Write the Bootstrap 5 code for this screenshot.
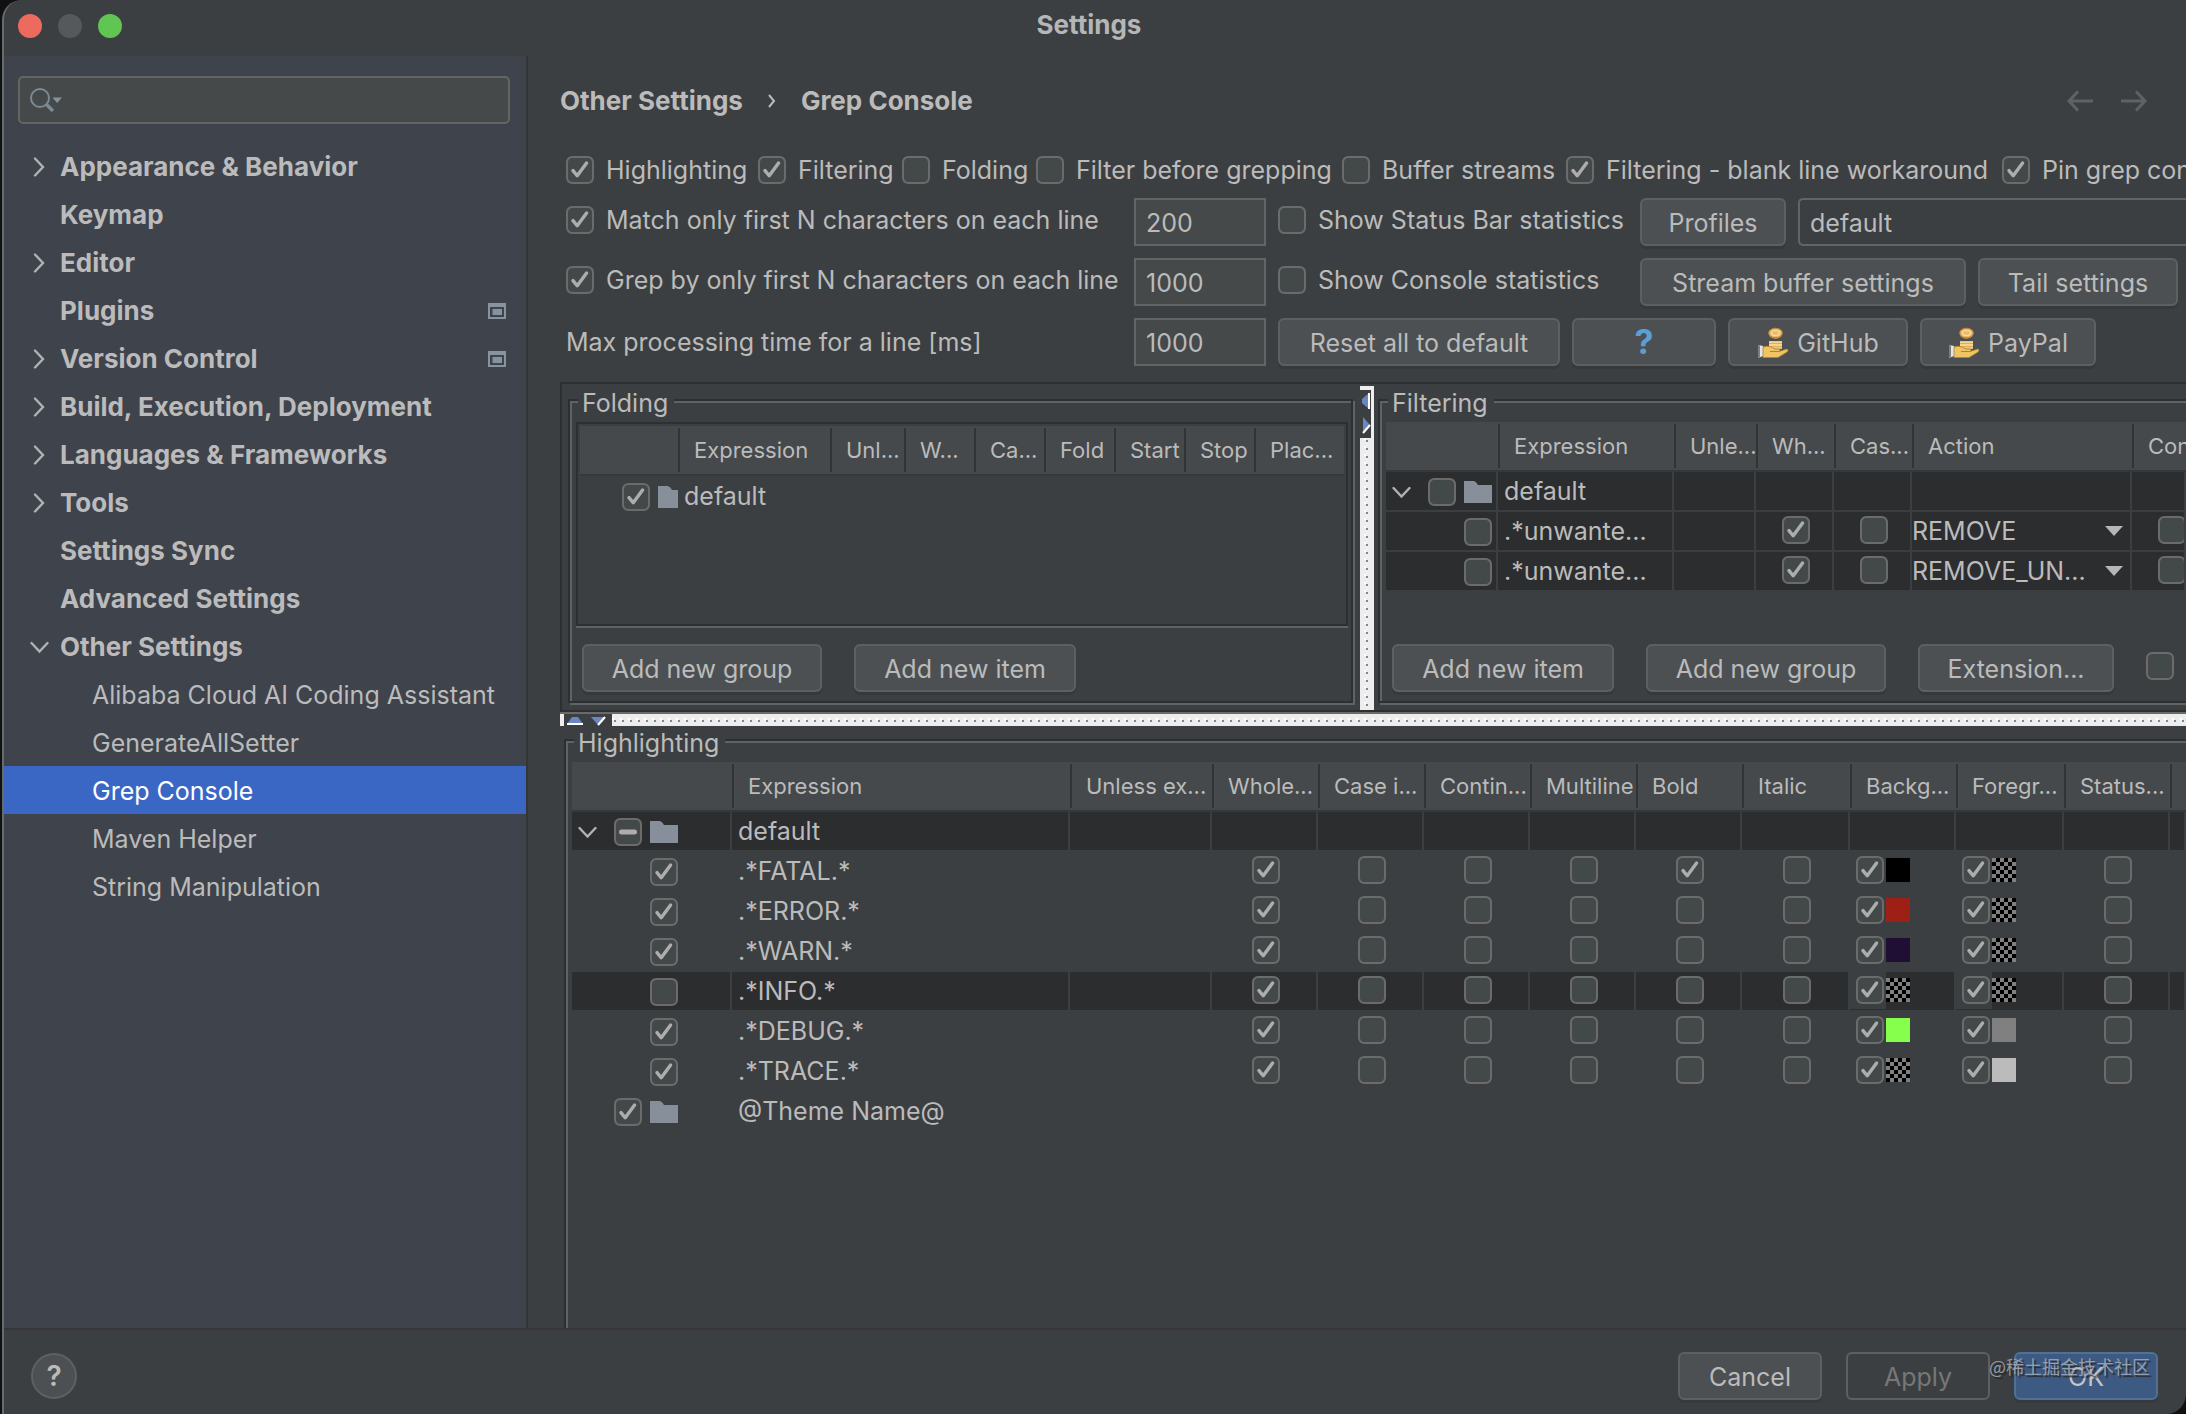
<!DOCTYPE html>
<html lang="en" data-bs-theme="dark">
<head>
<meta charset="utf-8">
<meta name="viewport" content="width=device-width, initial-scale=1">
<title>Settings</title>
<link href="https://cdn.jsdelivr.net/npm/bootstrap@5.3.0/dist/css/bootstrap.min.css" rel="stylesheet">
<style>
:root{--panel:#3c3f41;--side:#3f434c;--ink:#bbbbbb;--dark:#2d2f30;--lite:#606364;--sel:#2c2d2f;--head:#45494b;--field:#45494a;--edge:#646464}
body{background:#101112;color:var(--ink);font-family:Inter,"Noto Sans CJK SC",sans-serif;font-size:25px;line-height:28px;overflow:hidden}
.app-window{margin-left:2px;border-left:2px solid #686b6d;border-radius:20px 0 20px 0;background:var(--panel);overflow:hidden;position:relative}
.titlebar{height:56px;padding:0 26px 4px 14px}
.light{width:24px;height:24px;border-radius:50%}
.title-text{font-weight:700;font-size:26px;color:#b4b6b7;padding-bottom:2px}
.sidebar{width:524px;background:var(--side);border-right:2px solid #333537;padding-top:20px}
.search-wrap{margin:0 16px 18px 14px;height:48px;background:var(--field);border:2px solid var(--edge);border-radius:5px;padding-left:10px}
.search-wrap input{background:transparent;border:0;outline:0;color:var(--ink);min-width:0}
.side-link{height:48px;padding:2px 20px 0 26px;color:var(--ink);text-decoration:none;font-weight:700;font-size:26px}
.side-link .twist{width:20px;margin-right:10px}
.side-link.child{font-weight:400;font-size:25px;padding-left:88px}
.side-link.active{background:#3a66c4;color:#fff;margin-left:-2px;padding-left:90px!important}
.main-pane{padding-left:32px;min-width:0;overflow:hidden}
.crumbs{height:90px;margin-bottom:10px;font-weight:700;font-size:26px;padding-right:38px}
.opt-row{padding-left:6px;margin-bottom:12px;height:48px;white-space:nowrap}
.opt-row.first{display:grid;grid-template-columns:192px 144px 134px 306px 224px 436px auto;height:28px;margin-bottom:14px}
.opt-row.last{margin-bottom:16px}
.tick{gap:12px;flex:none}
.tall-tick{padding-bottom:4px}
.form-check-input{width:28px;height:28px;margin:0;flex:none;background-color:#434949;border:2px solid #6b6b6b;border-radius:5px;background-size:28px 28px;background-position:-2px -2px;--bs-form-check-bg:#434949}
.form-check-input:checked{background-color:#434949;border-color:#6b6b6b;background-image:url("data:image/svg+xml,%3Csvg xmlns='http://www.w3.org/2000/svg' viewBox='0 0 28 28'%3E%3Cpath d='M7 14.6 11.2 19.8 20.6 7' fill='none' stroke='%23adadad' stroke-width='3.4' stroke-linecap='round' stroke-linejoin='round'/%3E%3C/svg%3E")!important}
.form-check-input[type=checkbox]:indeterminate{background-color:#434949;border-color:#6b6b6b;background-image:url("data:image/svg+xml,%3Csvg xmlns='http://www.w3.org/2000/svg' viewBox='0 0 28 28'%3E%3Cpath d='M7.500 14H20.500' fill='none' stroke='%23adadad' stroke-width='5' stroke-linecap='round'/%3E%3C/svg%3E")}
.col-a{width:568px}.col-b{width:362px}
.num-box{width:132px;height:48px;background:var(--field);border:2px solid var(--edge);border-radius:0;color:var(--ink);font-size:25px;padding:2px 10px 0;margin-right:12px;flex:none}
.combo{height:48px;background:var(--panel);border:2px solid var(--edge);border-right:0;border-radius:5px 0 0 5px;color:var(--ink);font-size:25px;padding:2px 10px 0}
.btn-ide{--bs-btn-color:var(--ink);--bs-btn-bg:#4c5052;--bs-btn-border-color:#5e6060;--bs-btn-hover-bg:#55595b;--bs-btn-hover-color:#ddd;--bs-btn-disabled-bg:transparent;--bs-btn-disabled-color:#777;--bs-btn-disabled-border-color:#5e6060;--bs-btn-disabled-opacity:1;--bs-btn-border-width:2px;--bs-btn-border-radius:6px;--bs-btn-font-size:25px;--bs-btn-line-height:28px;height:48px;padding:2px 24px 0;box-shadow:0 3px 0 #36393b;flex:none;white-space:nowrap}
.btn-ide:disabled{box-shadow:none}
.btn-ide.ok{--bs-btn-bg:#3d5a82;--bs-btn-border-color:#507098;--bs-btn-color:#c4c4c4}
.w-std{width:144px}.w-profile{width:146px}.w-stream{width:326px}.w-tail{width:200px}.w-reset{width:282px}.w-git{width:180px}.w-pay{width:176px}.w-group{width:240px}.w-item{width:222px}.w-ext{width:196px}
.qmark{color:#5b9fd0;font-weight:700;font-size:34px}
.split-box{border:solid var(--dark);border-width:2px 0 2px 2px;height:330px;overflow:hidden}
.split-edge{height:2px;background:#6a6a6a}
.pane{padding:15px 7px 7px 6px}
.pane-fold{width:798px}
.pane-filter{padding:15px 0 7px 4px;min-width:0}
.etched{border:2px solid var(--dark);box-shadow:2px 2px 0 var(--lite),inset 2px 2px 0 var(--lite);padding:0 3px 9px 6px;min-width:0}
.etched.open-right{border-right:0;padding-right:0}
.etched.open-end{border-bottom:0;margin:13px 0 0 4px;overflow:visible}
.etched legend{float:left;width:auto;font-size:25px;line-height:28px;margin:-12px 0 5px 2px;padding:0 6px 0 4px;background:var(--panel)}
.grid-box{height:206px;margin-bottom:16px;clear:both;overflow:hidden}
.grid-box.sunken{border:2px solid var(--dark);height:204px;margin-bottom:18px;padding:2px;box-shadow:0 2px 0 var(--lite)}
.etched .actions{gap:32px;padding-left:6px}
.v-divider{width:14px;flex:none;margin-top:2px;border-top:4px solid #eee;border-right:2px solid #eee;background-color:#ededed;background-image:url("data:image/svg+xml,%3Csvg xmlns='http://www.w3.org/2000/svg' width='12' height='8'%3E%3Cpath d='M4 0h2v2h-2z' fill='%23fff'/%3E%3Cpath d='M6 2h2v2h-2z' fill='%237b8794'/%3E%3C/svg%3E");background-repeat:repeat-y}
.v-divider svg,.h-divider svg{display:block}
.h-divider{height:12px;flex:none;border-left:4px solid #eee;background-color:#ededed;background-image:url("data:image/svg+xml,%3Csvg xmlns='http://www.w3.org/2000/svg' width='8' height='12'%3E%3Cpath d='M0 4h2v2h-2z' fill='%23fff'/%3E%3Cpath d='M2 6h2v2h-2z' fill='%237b8794'/%3E%3C/svg%3E");background-repeat:repeat-x}
.tree-grid{table-layout:fixed;border-collapse:separate;border-spacing:0;color:var(--ink);width:100%;clear:both}
.tree-grid th{height:50px;padding:0 0 0 16px;font-weight:400;font-size:22px;line-height:28px;vertical-align:middle;white-space:nowrap;overflow:hidden;color:var(--ink);border-bottom:2px solid #35383a;background:var(--head)}
.tree-grid th+th{background:linear-gradient(#313436,#313436) 0 2px/2px 44px no-repeat var(--head)}
.tree-grid td{height:40px;padding:0;border-right:2px solid var(--panel);border-bottom:2px solid var(--panel);vertical-align:middle;white-space:nowrap;overflow:hidden;background:transparent;color:var(--ink);line-height:28px}
.sunken .tree-grid td{border-right-width:0;border-bottom-width:0}
.tree-grid td.label-cell{padding-left:6px}
.tree-grid tr.picked td{background:var(--sel)}
.tree-grid td.tick-cell{padding:0 0 2px 4px}
.tree-grid td.tick-cell .form-check-input{display:block;margin:0 auto}
.tree-grid td.last-tick{padding-left:26px}
.tree-grid td.last-tick .form-check-input{margin:0}
.tree{height:38px;padding-top:2px}
.tree svg,.tree .form-check-input{margin-right:8px}
.tree svg.twist-icon{margin:0 16px 0 6px}
.tree .twist-slot{width:42px}
.tree .indent{width:78px}
.swatch-box{height:38px;padding-bottom:2px}
.swatch-box span:first-child{height:38px;padding:5px 2px 0 6px;background:var(--panel)}
.sw{width:24px;height:24px}
.sw.checker{background:repeating-conic-gradient(#000 0 25%,#808080 0 50%) 0 0/8px 8px}
.act-select{width:100%;border:0;outline:0;appearance:none;color:var(--ink);font-size:25px;line-height:28px;padding:0;background:url("data:image/svg+xml,%3Csvg xmlns='http://www.w3.org/2000/svg' width='18' height='10'%3E%3Cpath d='M0 0h18l-9 10z' fill='%23b4b6b8'/%3E%3C/svg%3E") right 7px center no-repeat}
.footer-bar{height:86px;border-top:2px solid #393536;padding:8px 28px 0 27px;gap:24px}
.help-btn{width:46px;height:46px;border-radius:50%;background:#4c5052;border:2px solid #5e6060;color:var(--ink);font-weight:600;font-size:28px;padding:0}
.ok-wrap{position:relative}
.watermark{position:absolute;right:8px;top:0;font-size:18px;line-height:28px;color:#a9b0bb;opacity:.8;white-space:nowrap;text-shadow:2px 2px 1px #222;pointer-events:none;font-family:"Noto Sans CJK SC",sans-serif}
</style>
</head>
<body>
<svg width="0" height="0" class="position-absolute" aria-hidden="true">
  <symbol id="right" viewBox="0 0 20 20"><path d="M5 1.500 13 10 5 18.500" fill="none" stroke="#b0b2b5" stroke-width="2.400" stroke-linecap="round"/></symbol>
  <symbol id="down" viewBox="0 0 20 20"><path d="M1.500 6 9.500 14.500 17.500 6" fill="none" stroke="#b0b2b5" stroke-width="2.400" stroke-linecap="round"/></symbol>
  <symbol id="folder" viewBox="0 0 28 22"><path d="M0 0H10Q12.500 1 14 4H28V22H0Z" fill="#87909a"/></symbol>
  <symbol id="scope" viewBox="0 0 18 16"><path d="M0 0H18V16H0ZM2 4V14H16V4ZM4.500 6H14V12H4.500Z" fill="#87939e" fill-rule="evenodd"/></symbol>
  <symbol id="donate" viewBox="0 0 32 32">
    <path d="M1 18 6 19V29L1 31Z" fill="#e3e5e8"/><path d="M1 18 3 18.500V30L1 31Z" fill="#7b8086"/>
    <path d="M12 14.500h13v6H12z" fill="#e2ac53"/><path d="M12 15h13M12 18h13M12 21h13" stroke="#fbe2a4" stroke-width="1.600"/>
    <path d="M6 20Q10 18.500 14 20L18 22H22Q24 23 22 24.500L30 22Q32 23 30 25L21 30.500H6Z" fill="#efc463" stroke="#b5812f" stroke-width=".8"/>
    <path d="M13 24.500H22" stroke="#b5812f" stroke-width="1"/>
    <ellipse cx="18.500" cy="6" rx="6.800" ry="4.800" fill="#e9bd6c" stroke="#c07f35" stroke-width="1"/><path d="M12 8Q18.500 14 25 8V9Q18.500 15 12 9Z" fill="#c98a3d"/>
    <ellipse cx="18.500" cy="6" rx="4" ry="2.500" fill="none" stroke="#f9dfa6" stroke-width="1.200"/>
  </symbol>
</svg>
<div class="app-window vh-100 d-flex flex-column">
  <header class="titlebar d-flex align-items-center flex-shrink-0">
    <div class="d-flex gap-3" style="flex:1"><span class="light" style="background:#ed6a5e"></span><span class="light" style="background:#56595b"></span><span class="light" style="background:#61c554"></span></div>
    <div class="title-text">Settings</div>
    <div style="flex:1"></div>
  </header>
  <div class="d-flex flex-grow-1" style="min-height:0">
    <nav class="sidebar flex-shrink-0" aria-label="Settings sections">
      <div class="search-wrap d-flex align-items-center">
        <svg width="34" height="28" viewBox="0 0 34 28"><circle cx="10" cy="12" r="9" fill="none" stroke="#7c8a93" stroke-width="2"/><path d="M16 18 23 25" stroke="#7c8a93" stroke-width="3.400"/><path d="M22.500 11.500H32L27.200 17Z" fill="#87939a"/></svg>
        <input type="search" class="flex-grow-1" aria-label="Search settings">
      </div>
      <a href="#" class="side-link d-flex align-items-center"><svg class="twist" height="20"><use href="#right"/></svg>Appearance &amp; Behavior</a>
      <a href="#" class="side-link d-flex align-items-center"><span class="twist"></span>Keymap</a>
      <a href="#" class="side-link d-flex align-items-center"><svg class="twist" height="20"><use href="#right"/></svg>Editor</a>
      <a href="#" class="side-link d-flex align-items-center"><span class="twist"></span>Plugins<svg class="ms-auto" width="18" height="16"><use href="#scope"/></svg></a>
      <a href="#" class="side-link d-flex align-items-center"><svg class="twist" height="20"><use href="#right"/></svg>Version Control<svg class="ms-auto" width="18" height="16"><use href="#scope"/></svg></a>
      <a href="#" class="side-link d-flex align-items-center"><svg class="twist" height="20"><use href="#right"/></svg>Build, Execution, Deployment</a>
      <a href="#" class="side-link d-flex align-items-center"><svg class="twist" height="20"><use href="#right"/></svg>Languages &amp; Frameworks</a>
      <a href="#" class="side-link d-flex align-items-center"><svg class="twist" height="20"><use href="#right"/></svg>Tools</a>
      <a href="#" class="side-link d-flex align-items-center"><span class="twist"></span>Settings Sync</a>
      <a href="#" class="side-link d-flex align-items-center"><span class="twist"></span>Advanced Settings</a>
      <a href="#" class="side-link d-flex align-items-center"><svg class="twist" height="20"><use href="#down"/></svg>Other Settings</a>
      <a href="#" class="side-link child d-flex align-items-center">Alibaba Cloud AI Coding Assistant</a>
      <a href="#" class="side-link child d-flex align-items-center">GenerateAllSetter</a>
      <a href="#" class="side-link child active d-flex align-items-center" aria-current="page">Grep Console</a>
      <a href="#" class="side-link child d-flex align-items-center">Maven Helper</a>
      <a href="#" class="side-link child d-flex align-items-center">String Manipulation</a>
    </nav>
    <main class="main-pane flex-grow-1 d-flex flex-column">
      <div class="crumbs d-flex align-items-center flex-shrink-0">
        <span>Other Settings</span>
        <svg class="mx-4" width="10" height="18" viewBox="0 0 10 18"><path d="M2 3 7 9 2 15" fill="none" stroke="#bbb" stroke-width="2"/></svg>
        <span>Grep Console</span>
        <span class="ms-auto d-flex" style="gap:26px">
          <svg width="28" height="24" viewBox="0 0 28 24"><path d="M27 12H3M12 2.500 3 12 12 21.500" fill="none" stroke="#606162" stroke-width="3"/></svg>
          <svg width="28" height="24" viewBox="0 0 28 24"><path d="M1 12H25M16 2.500 25 12 16 21.500" fill="none" stroke="#606162" stroke-width="3"/></svg>
        </span>
      </div>
      <div class="opt-row first align-items-center flex-shrink-0">
        <label class="tick d-flex align-items-center"><input type="checkbox" class="form-check-input" checked>Highlighting</label>
        <label class="tick d-flex align-items-center"><input type="checkbox" class="form-check-input" checked>Filtering</label>
        <label class="tick d-flex align-items-center"><input type="checkbox" class="form-check-input">Folding</label>
        <label class="tick d-flex align-items-center"><input type="checkbox" class="form-check-input">Filter before grepping</label>
        <label class="tick d-flex align-items-center"><input type="checkbox" class="form-check-input">Buffer streams</label>
        <label class="tick d-flex align-items-center"><input type="checkbox" class="form-check-input" checked>Filtering - blank line workaround</label>
        <label class="tick d-flex align-items-center"><input type="checkbox" class="form-check-input" checked>Pin grep con</label>
      </div>
      <div class="opt-row d-flex align-items-center flex-shrink-0">
        <label class="tick tall-tick col-a d-flex align-items-center"><input type="checkbox" class="form-check-input" checked>Match only first N characters on each line</label>
        <input type="text" class="num-box" value="200" aria-label="Match character limit">
        <label class="tick tall-tick col-b d-flex align-items-center"><input type="checkbox" class="form-check-input">Show Status Bar statistics</label>
        <button type="button" class="btn btn-ide w-profile me-2">Profiles</button>
        <select class="combo flex-grow-1 ms-1" style="appearance:none" aria-label="Profile"><option>default</option></select>
      </div>
      <div class="opt-row d-flex align-items-center flex-shrink-0">
        <label class="tick tall-tick col-a d-flex align-items-center"><input type="checkbox" class="form-check-input" checked>Grep by only first N characters on each line</label>
        <input type="text" class="num-box" value="1000" aria-label="Grep character limit">
        <label class="tick tall-tick col-b d-flex align-items-center"><input type="checkbox" class="form-check-input">Show Console statistics</label>
        <span class="d-flex" style="gap:12px"><button type="button" class="btn btn-ide w-stream">Stream buffer settings</button><button type="button" class="btn btn-ide w-tail">Tail settings</button></span>
      </div>
      <div class="opt-row last d-flex align-items-center flex-shrink-0">
        <label class="col-a flex-shrink-0" for="maxtime">Max processing time for a line [ms]</label>
        <input type="text" class="num-box" id="maxtime" value="1000">
        <span class="d-flex" style="gap:12px">
          <button type="button" class="btn btn-ide w-reset">Reset all to default</button>
          <button type="button" class="btn btn-ide w-std"><span class="qmark">?</span></button>
          <button type="button" class="btn btn-ide w-git d-flex align-items-center justify-content-center"><svg width="32" height="32" class="me-2"><use href="#donate"/></svg>GitHub</button>
          <button type="button" class="btn btn-ide w-pay d-flex align-items-center justify-content-center"><svg width="32" height="32" class="me-2"><use href="#donate"/></svg>PayPal</button>
        </span>
      </div>
      <div class="split-box d-flex flex-shrink-0">
        <div class="pane pane-fold flex-shrink-0">
          <fieldset class="etched">
            <legend>Folding</legend>
            <div class="grid-box sunken">
              <table class="table mb-0 tree-grid">
                <colgroup><col style="width:98px"><col style="width:152px"><col style="width:74px"><col style="width:70px"><col style="width:70px"><col style="width:70px"><col style="width:70px"><col style="width:70px"><col></colgroup>
                <thead><tr><th></th><th>Expression</th><th>Unl...</th><th>W...</th><th>Ca...</th><th>Fold</th><th>Start</th><th>Stop</th><th>Plac...</th></tr></thead>
                <tbody><tr><td><div class="tree d-flex align-items-center"><span class="twist-slot flex-shrink-0"></span><input type="checkbox" class="form-check-input" checked aria-label="default group"><svg width="28" height="22" class="flex-shrink-0"><use href="#folder"/></svg></div></td><td class="label-cell">default</td><td></td><td></td><td></td><td></td><td></td><td></td><td></td></tr></tbody>
              </table>
            </div>
            <div class="actions d-flex"><button type="button" class="btn btn-ide w-group">Add new group</button><button type="button" class="btn btn-ide w-item">Add new item</button></div>
          </fieldset>
        </div>
        <div class="v-divider"><svg width="12" height="48" viewBox="0 0 12 48"><path d="M0 0H11V48H0Z" fill="#3c3f41"/><path d="M9 3V19L2 13V9Z" fill="#6c86c4"/><path d="M9 3V19" stroke="#fff" stroke-width="2"/><path d="M3 27 10 35 3 42Z" fill="#6c86c4"/><path d="M10 35 3 43" stroke="#fff" stroke-width="2"/></svg></div>
        <div class="pane-filter flex-grow-1">
          <fieldset class="etched open-right">
            <legend>Filtering</legend>
            <div class="grid-box">
              <table class="table mb-0 tree-grid">
                <colgroup><col style="width:112px"><col style="width:176px"><col style="width:82px"><col style="width:78px"><col style="width:78px"><col style="width:220px"><col></colgroup>
                <thead><tr><th></th><th>Expression</th><th>Unle...</th><th>Wh...</th><th>Cas...</th><th>Action</th><th>Con</th></tr></thead>
                <tbody>
                  <tr class="picked"><td><div class="tree d-flex align-items-center"><svg width="20" height="20" class="flex-shrink-0 twist-icon"><use href="#down"/></svg><input type="checkbox" class="form-check-input" aria-label="default group"><svg width="28" height="22" class="flex-shrink-0"><use href="#folder"/></svg></div></td><td class="label-cell">default</td><td></td><td></td><td></td><td></td><td></td></tr>
                  <tr class="picked"><td><div class="tree d-flex align-items-center"><span class="indent flex-shrink-0"></span><input type="checkbox" class="form-check-input" aria-label="Enabled"></div></td><td class="label-cell">.*unwante...</td><td></td><td class="tick-cell"><input type="checkbox" class="form-check-input" checked aria-label="Whole line"></td><td class="tick-cell"><input type="checkbox" class="form-check-input" aria-label="Case insensitive"></td><td><select class="act-select" aria-label="Action"><option>REMOVE</option></select></td><td class="tick-cell last-tick"><input type="checkbox" class="form-check-input" aria-label="Continue matching"></td></tr>
                  <tr class="picked"><td><div class="tree d-flex align-items-center"><span class="indent flex-shrink-0"></span><input type="checkbox" class="form-check-input" aria-label="Enabled"></div></td><td class="label-cell">.*unwante...</td><td></td><td class="tick-cell"><input type="checkbox" class="form-check-input" checked aria-label="Whole line"></td><td class="tick-cell"><input type="checkbox" class="form-check-input" aria-label="Case insensitive"></td><td><select class="act-select" aria-label="Action"><option>REMOVE_UN...</option></select></td><td class="tick-cell last-tick"><input type="checkbox" class="form-check-input" aria-label="Continue matching"></td></tr>
                </tbody>
              </table>
            </div>
            <div class="actions d-flex align-items-center"><button type="button" class="btn btn-ide w-item">Add new item</button><button type="button" class="btn btn-ide w-group">Add new group</button><button type="button" class="btn btn-ide w-ext">Extension...</button><input type="checkbox" class="form-check-input mb-1" aria-label="Filter option"></div>
          </fieldset>
        </div>
      </div>
      <div class="split-edge flex-shrink-0"></div>
      <div class="h-divider"><svg width="48" height="12" viewBox="0 0 48 12"><path d="M0 0H48V12H0Z" fill="#3c3f41"/><path d="M3 10 8 3H14L19 10Z" fill="#6c86c4"/><path d="M3 10H19" stroke="#fff" stroke-width="2"/><path d="M27 3H41L34 11Z" fill="#6c86c4"/><path d="M41 3 34 11" stroke="#fff" stroke-width="2"/></svg></div>
      <fieldset class="etched open-right open-end flex-grow-1">
        <legend>Highlighting</legend>
        <table class="table mb-0 tree-grid">
          <colgroup><col style="width:160px"><col style="width:338px"><col style="width:142px"><col style="width:106px"><col style="width:106px"><col style="width:106px"><col style="width:106px"><col style="width:106px"><col style="width:108px"><col style="width:106px"><col style="width:108px"><col style="width:106px"><col></colgroup>
          <thead><tr><th></th><th>Expression</th><th>Unless ex...</th><th>Whole...</th><th>Case i...</th><th>Contin...</th><th>Multiline</th><th>Bold</th><th>Italic</th><th>Backg...</th><th>Foregr...</th><th>Status...</th><th></th></tr></thead>
          <tbody id="rules">
            <tr class="picked"><td><div class="tree d-flex align-items-center"><svg width="20" height="20" class="flex-shrink-0 twist-icon"><use href="#down"/></svg><input type="checkbox" class="form-check-input" id="mixed" aria-label="default group"><svg width="28" height="22" class="flex-shrink-0"><use href="#folder"/></svg></div></td><td class="label-cell">default</td><td></td><td></td><td></td><td></td><td></td><td></td><td></td><td></td><td></td><td></td><td></td></tr>
          </tbody>
          <tfoot>
            <tr><td><div class="tree d-flex align-items-center"><span class="twist-slot flex-shrink-0"></span><input type="checkbox" class="form-check-input" checked aria-label="Theme group"><svg width="28" height="22" class="flex-shrink-0"><use href="#folder"/></svg></div></td><td class="label-cell">@Theme Name@</td><td colspan="11"></td></tr>
          </tfoot>
        </table>
      </fieldset>
    </main>
  </div>
  <footer class="footer-bar d-flex align-items-center flex-shrink-0">
    <button type="button" class="help-btn me-auto" aria-label="Help">?</button>
    <button type="button" class="btn btn-ide w-std">Cancel</button>
    <button type="button" class="btn btn-ide w-std" disabled>Apply</button>
    <div class="ok-wrap"><button type="button" class="btn btn-ide ok w-std">OK</button><span class="watermark">@稀土掘金技术社区</span></div>
  </footer>
</div>
<script src="https://cdn.jsdelivr.net/npm/bootstrap@5.3.0/dist/js/bootstrap.bundle.min.js"></script>
<script>
document.getElementById('mixed').indeterminate = true;
const rules = [
  {name: 'FATAL', on: true, bold: true, bg: '#000000', fg: null},
  {name: 'ERROR', on: true, bg: '#9d1f15', fg: null},
  {name: 'WARN', on: true, bg: '#200f35', fg: null},
  {name: 'INFO', on: false, picked: true, bg: null, fg: null},
  {name: 'DEBUG', on: true, bg: '#86ff4c', fg: '#808080'},
  {name: 'TRACE', on: true, bg: null, fg: '#bbbbbb'}
];
const box = (on, label) => `<input type="checkbox" class="form-check-input" aria-label="${label}"${on ? ' checked' : ''}>`;
const tickCell = (on, label) => `<td class="tick-cell">${box(on, label)}</td>`;
const colorCell = (color, label) => `<td><div class="swatch-box d-flex align-items-center"><span>${box(true, label)}</span>` +
  (color ? `<span class="sw" style="background:${color}"></span>` : '<span class="sw checker"></span>') + '</div></td>';
document.getElementById('rules').insertAdjacentHTML('beforeend', rules.map(r =>
  `<tr${r.picked ? ' class="picked"' : ''}><td><div class="tree d-flex align-items-center"><span class="indent flex-shrink-0"></span>${box(r.on, r.name)}</div></td>` +
  `<td class="label-cell">.*${r.name}.*</td><td></td>` +
  tickCell(true, 'Whole line') + tickCell(false, 'Case insensitive') + tickCell(false, 'Continue matching') + tickCell(false, 'Multiline') +
  tickCell(r.bold, 'Bold') + tickCell(false, 'Italic') + colorCell(r.bg, 'Background') + colorCell(r.fg, 'Foreground') +
  tickCell(false, 'Status bar count') + '<td></td></tr>').join(''));
</script>
</body>
</html>
